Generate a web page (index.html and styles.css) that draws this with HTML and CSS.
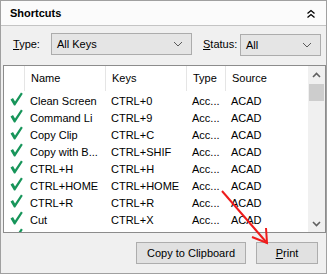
FILE: index.html
```html
<!DOCTYPE html>
<html lang="en">
<head>
  <meta charset="UTF-8" />
  <title>Shortcuts</title>
  <link rel="stylesheet" href="styles.css">
</head>
<body>
  <div class="panel">
    <div class="titlebar">
      <span class="title">Shortcuts</span>
      <svg class="collapse" width="10" height="10" viewBox="0 0 10 10">
        <polyline points="1.5,4.5 5,1.5 8.5,4.5" fill="none" stroke="#000" stroke-width="1.3"/>
        <polyline points="1.5,8.5 5,5.5 8.5,8.5" fill="none" stroke="#000" stroke-width="1.3"/>
      </svg>
    </div>

    <div class="filters">
      <label class="lbl"><u>T</u>ype:</label>
      <div class="combo combo-type">
        <span>All Keys</span>
        <svg width="10" height="6" viewBox="0 0 10 6"><polyline points="1,1 5,5 9,1" fill="none" stroke="#5a5a5a" stroke-width="1"/></svg>
      </div>
      <label class="lbl lbl-status"><u>S</u>tatus:</label>
      <div class="combo combo-status">
        <span>All</span>
        <svg width="10" height="6" viewBox="0 0 10 6"><polyline points="1,1 5,5 9,1" fill="none" stroke="#5a5a5a" stroke-width="1"/></svg>
      </div>
    </div>

    <div class="list">
      <div class="grid">
        <div class="row head">
          <div class="c chk"></div>
          <div class="c">Name</div>
          <div class="c">Keys</div>
          <div class="c">Type</div>
          <div class="c">Source</div>
        </div>
        <div id="rows"></div>
      </div>
      <div class="scrollbar">
        <div class="sb-btn"><svg width="9" height="6" viewBox="0 0 9 6"><polyline points="1,5 4.5,1.5 8,5" fill="none" stroke="#606060" stroke-width="1.6"/></svg></div>
        <div class="thumb"></div>
        <div class="track"></div>
        <div class="sb-btn"><svg width="9" height="6" viewBox="0 0 9 6"><polyline points="1,1 4.5,4.5 8,1" fill="none" stroke="#606060" stroke-width="1.6"/></svg></div>
      </div>
    </div>

    <div class="buttons">
      <button class="btn btn-copy">Copy to Clipboard</button>
      <button class="btn btn-print"><u>P</u>rint</button>
    </div>

    <svg class="arrow" width="329" height="276" viewBox="0 0 329 276">
      <line x1="222" y1="191" x2="267" y2="243" stroke="#ee1c1c" stroke-width="2"/>
      <polyline points="252,237 267,243 266,228" fill="none" stroke="#ee1c1c" stroke-width="2"/>
    </svg>
  </div>

  <script>
    const shortcuts = [
      ['Clean Screen', 'CTRL+0'],
      ['Command Li', 'CTRL+9'],
      ['Copy Clip', 'CTRL+C'],
      ['Copy with B...', 'CTRL+SHIF'],
      ['CTRL+H', 'CTRL+H'],
      ['CTRL+HOME', 'CTRL+HOME'],
      ['CTRL+R', 'CTRL+R'],
      ['Cut', 'CTRL+X']
    ];
    const check = '<svg width="13" height="14" viewBox="0 0 13 14"><path d="M0.5,7.5 L3,6 L5,9.5 L11,0.5 L12.8,1.8 L5.2,13.5 L4,13.5 Z" fill="#17955a"/></svg>';
    const row = (name, keys, type, src) => `
      <div class="row">
        <div class="c chk">${check}</div>
        <div class="c">${name}</div>
        <div class="c">${keys}</div>
        <div class="c">${type}</div>
        <div class="c">${src}</div>
      </div>
    `;
    document.getElementById('rows').innerHTML =
      shortcuts.map(s => row(s[0], s[1], 'Acc...', 'ACAD')).join('') + row('', '', '', '');
  </script>
</body>
</html>
```

FILE: styles.css
```css
html, body {
  margin: 0;
  padding: 0;
  background: #ffffff;
  font-family: "Liberation Sans", Arial, sans-serif;
  font-size: 11px;
  color: #000;
}
.panel {
  position: relative;
  width: 325px;
  height: 272px;
  border: 1px solid #a0a0a0;
  background: #f0f0f0;
  display: flex;
  flex-direction: column;
}
.titlebar {
  height: 24px;
  background: #fbfbfb;
  border-bottom: 1px solid #c4c4c4;
  display: flex;
  align-items: center;
  justify-content: space-between;
  padding: 0 10px 0 9px;
}
.title {
  font-weight: bold;
  font-size: 11px;
}
.collapse {
  margin-top: 2px;
}
.filters {
  display: flex;
  align-items: center;
  padding: 7px 0 10px 12px;
  height: 22px;
}
.lbl {
  width: 38px;
}
.lbl-status {
  width: 37px;
  margin-left: 11px;
}
.combo {
  height: 20px;
  border: 1px solid #acacac;
  background: #e5e5e5;
  display: flex;
  align-items: center;
  justify-content: space-between;
  padding: 0 8px 0 5px;
}
.combo-type {
  width: 126px;
}
.combo-status {
  width: 66px;
  margin-top: 2px;
}
.list {
  margin: 0 0 0 2px;
  width: 321px;
  height: 166px;
  border: 1px solid #8c8c8c;
  background: #fff;
  display: flex;
  overflow: hidden;
}
.grid {
  flex: 1;
  overflow: hidden;
}
.row {
  display: grid;
  grid-template-columns: 20px 81px 81px 39px 83px;
  height: 17px;
  align-items: center;
}
.row.head {
  height: 25px;
  margin-bottom: 1px;
}
.row.head .c {
  height: 25px;
  line-height: 25px;
  border-left: 1px solid #e5e5e5;
}
.row.head .chk {
  border-left: none;
}
.c {
  padding-left: 6px;
  white-space: nowrap;
  overflow: hidden;
}
.row .chk {
  padding-left: 6px;
  height: 17px;
  display: flex;
  align-items: flex-start;
}
.scrollbar {
  width: 17px;
  background: #f0f0f0;
  display: flex;
  flex-direction: column;
}
.sb-btn {
  height: 17px;
  display: flex;
  align-items: center;
  justify-content: center;
}
.thumb {
  height: 17px;
  margin: 1px 1px 0 1px;
  background: #cdcdcd;
}
.track {
  flex: 1;
}
.buttons {
  display: flex;
  justify-content: flex-end;
  gap: 10px;
  padding: 9px 8px 0 0;
}
.btn {
  height: 22px;
  border: 1px solid #adadad;
  background: #e1e1e1;
  font-family: "Liberation Sans", Arial, sans-serif;
  font-size: 11px;
  color: #000;
  padding: 0;
}
.btn-copy {
  width: 110px;
}
.btn-print {
  width: 62px;
}
.arrow {
  position: absolute;
  left: -1px;
  top: -1px;
  pointer-events: none;
}
```
